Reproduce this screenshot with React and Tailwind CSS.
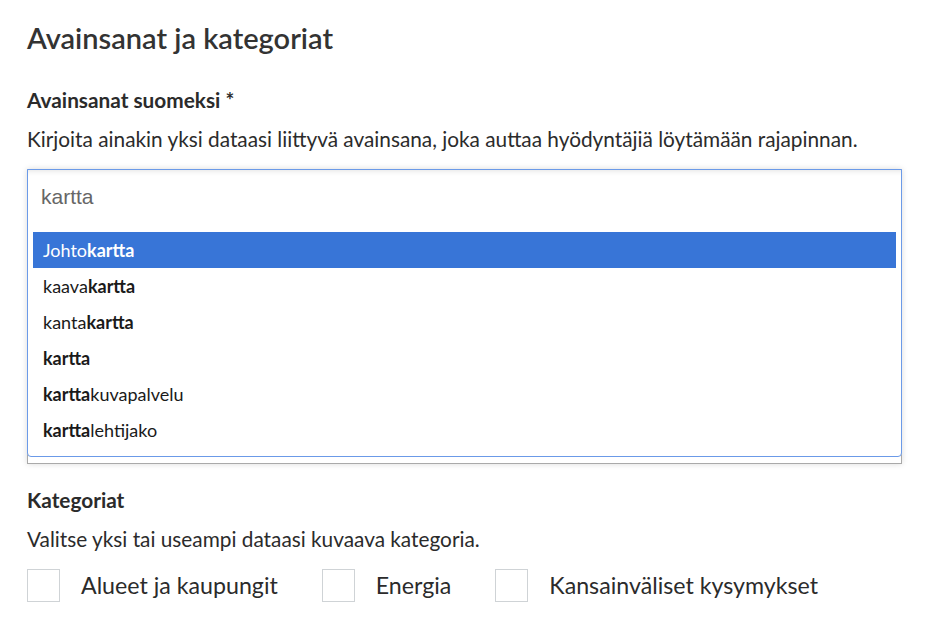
import React from "react";

const items = [
  ["Johto", "kartta", ""],
  ["kaava", "kartta", ""],
  ["kanta", "kartta", ""],
  ["", "kartta", ""],
  ["", "kartta", "kuvapalvelu"],
  ["", "kartta", "lehtijako"],
];

function Check({ label }) {
  return (
    <label className="flex items-center">
      <span className="block w-[33px] h-[33px] border border-[#cfd3d6] bg-white"></span>
      <span className="ml-[21px] text-[23.2px] leading-[33px] text-[#2b2b2b]">{label}</span>
    </label>
  );
}

export default function App() {
  return (
    <div
      className="bg-white w-[928px] h-[619px] overflow-hidden px-[27px] pt-[18px] text-[#2b2b2b]"
      style={{ fontFamily: "Lato, 'Noto Sans', sans-serif" }}
    >
      <h2 className="text-[29px] font-semibold leading-[40px] text-[#333]">Avainsanat ja kategoriat</h2>
      <div className="mt-[28px] text-[20.8px] font-bold leading-[28px]">Avainsanat suomeksi *</div>
      <p className="mt-[11px] text-[20.8px] leading-[28px] whitespace-nowrap">
        Kirjoita ainakin yksi dataasi liittyvä avainsana, joka auttaa hyödyntäjiä löytämään rajapinnan.
      </p>
      <div className="mt-[16px] w-[875px] h-[295px] border border-[#a9a9a9] shadow-[0_0_6px_rgba(0,0,0,0.15)] bg-white">
        <div className="h-[288px] -m-px border border-[#6b9ae8] rounded-b-[4px] bg-white">
          <div className="h-[53px] flex items-center pl-[13px] shadow-[inset_0_6px_6px_-6px_rgba(0,0,0,0.15)]">
            <span
              className="text-[21px] text-[#666]"
              style={{ fontFamily: "'Liberation Sans', Arial, sans-serif" }}
            >
              kartta
            </span>
          </div>
          <ul className="mt-[9px] mx-[5px]">
            {items.map(([a, b, c], i) => (
              <li
                key={i}
                className={
                  "h-[36px] flex items-center pl-[10px] text-[18px] " +
                  (i === 0 ? "bg-[#3875d7] text-white" : "text-[#1a1a1a]")
                }
              >
                <span>{a}</span>
                <b className="font-bold">{b}</b>
                <span>{c}</span>
              </li>
            ))}
          </ul>
        </div>
      </div>
      <div className="mt-[22px] text-[20.8px] font-bold leading-[28px]">Kategoriat</div>
      <p className="mt-[11px] text-[20.8px] leading-[28px]">Valitse yksi tai useampi dataasi kuvaava kategoria.</p>
      <div className="mt-[16px] flex gap-[44px]">
        <Check label="Alueet ja kaupungit" />
        <Check label="Energia" />
        <Check label="Kansainväliset kysymykset" />
      </div>
    </div>
  );
}
